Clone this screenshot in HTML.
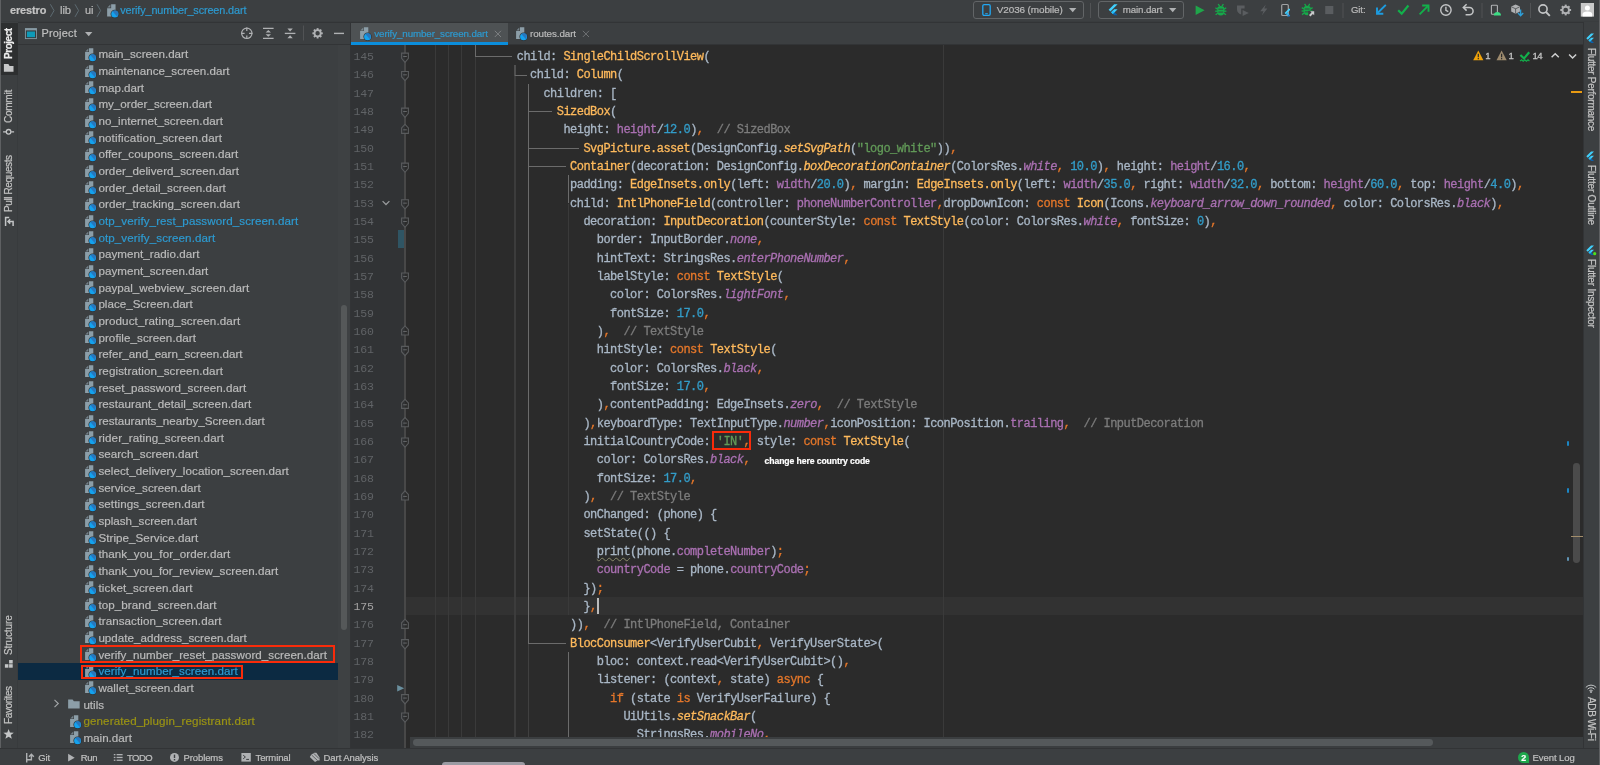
<!DOCTYPE html>
<html><head><meta charset="utf-8"><title>IDE</title>
<style>
html,body{margin:0;padding:0;background:#3c3f41;overflow:hidden;}
body{width:1600px;height:765px;position:relative;font-family:"Liberation Sans",sans-serif;}
#root{position:absolute;left:0;top:0;width:1600px;height:765px;will-change:transform;}
.t{position:absolute;white-space:pre;-webkit-text-stroke:0.2px;}
.c{position:absolute;white-space:pre;font-family:"Liberation Mono",monospace;font-size:12.0px;letter-spacing:-0.5345px;height:18px;line-height:18px;color:#a9b7c6;-webkit-text-stroke:0.3px;}
.c i{font-style:italic;}
.Y{color:#ffba5c;} .P{color:#aa70b2;} .K{color:#e5772a;} .N{color:#339dc9;} .S{color:#629a58;} .C{color:#7c7c7c;}
.ln{position:absolute;font-family:"Liberation Mono",monospace;font-size:11.5px;letter-spacing:-0.2344px;height:18px;line-height:18px;color:#606366;white-space:pre;}
svg{position:absolute;overflow:visible;}
.rv{position:absolute;white-space:pre;transform-origin:0 0;font-size:11px;color:#bbbbbb;height:14px;line-height:14px;-webkit-text-stroke:0.2px;}
</style></head><body><div id="root">
<div style="position:absolute;left:0px;top:21px;width:1600px;height:1px;background:#393c3e;"></div>
<div style="position:absolute;left:0px;top:22px;width:1600px;height:1px;background:#323436;"></div>
<div style="position:absolute;left:0px;top:22px;width:18px;height:726px;background:#3c3f41;"></div>
<div style="position:absolute;left:0px;top:0px;width:1px;height:765px;background:#5e6062;"></div>
<div style="position:absolute;left:17px;top:23px;width:1px;height:725px;background:#383b3d;"></div>
<div style="position:absolute;left:1px;top:23px;width:17px;height:52px;background:#2d2f30;"></div>
<div style="position:absolute;left:18px;top:44px;width:332px;height:1px;background:#323436;"></div>
<div style="position:absolute;left:350px;top:44px;width:1233px;height:1px;background:#323436;"></div>
<div style="position:absolute;left:350px;top:45px;width:56px;height:703px;background:#313335;"></div>
<div style="position:absolute;left:350px;top:22px;width:1px;height:726px;background:#323436;"></div>
<div style="position:absolute;left:406px;top:45px;width:1177px;height:703px;background:#2b2b2b;"></div>
<div style="position:absolute;left:404px;top:45px;width:2px;height:703px;background:#484848;"></div>
<div style="position:absolute;left:1583px;top:22px;width:17px;height:726px;background:#3c3f41;"></div>
<div style="position:absolute;left:1583px;top:22px;width:1px;height:726px;background:#323436;"></div>
<div style="position:absolute;left:0px;top:748px;width:1600px;height:17px;background:#3c3f41;"></div>
<div style="position:absolute;left:0px;top:748px;width:1600px;height:1px;background:#323436;"></div>
<div style="position:absolute;left:351px;top:23px;width:156.5px;height:22px;background:#4e5254;"></div>
<div style="position:absolute;left:351px;top:42px;width:156.5px;height:3px;background:#0b8edc;"></div>
<svg width="0" height="0" style="position:absolute"><defs>
<symbol id="df" viewBox="0 0 12 14">
  <path d="M4.0 0.2 H8.3 V12.1 H0.1 V4.1 H4.0 Z" fill="#8c9ea8"/>
  <path d="M3.3 0.5 L0.3 3.5 H3.3 Z" fill="#8c9ea8" fill-opacity=".7"/>
  <circle cx="7.6" cy="9.75" r="4.15" fill="#2e3133"/>
  <circle cx="7.6" cy="9.75" r="3.5" fill="#14a2ee"/>
  <path d="M5.3 7.1 A3.5 3.5 0 0 1 10.9 8.6 L10.0 12.3 Z" fill="#2a72b8" fill-opacity=".9"/>
</symbol>
<symbol id="fold" viewBox="0 0 16 16">
  <path d="M1 3 H6.4 L8 5.2 H15 V14 H1 Z" fill="#8c9ea8"/>
</symbol>
<symbol id="flutter" viewBox="0 0 16 16">
  <path d="M9.6 1 L2.2 8.4 L4.5 10.7 L14.2 1 Z" fill="#40d0fd"/>
  <path d="M9.6 7.6 L5.6 11.6 L7.9 13.9 L14.2 7.6 Z" fill="#40d0fd"/>
  <path d="M7.9 13.9 L9.6 15.6 H14.2 L10.2 11.6 Z" fill="#0c5fa8"/>
  <path d="M5.6 11.6 L7.9 9.3 L10.2 11.6 L7.9 13.9 Z" fill="#1fbcfd"/>
</symbol>
</defs></svg>
<div style="position:absolute;left:18px;top:663.19px;width:320.5px;height:16.4px;background:#0c2a42;"></div>
<svg style="left:84.90px;top:47.85px" width="12" height="14" ><use href="#df"/></svg>
<div class="t" style="left:98.40px;top:46.00px;height:16px;line-height:16px;font-size:11.6px;color:#bbbbbb;letter-spacing:0.014px;">main_screen.dart</div>
<svg style="left:84.90px;top:64.52px" width="12" height="14" ><use href="#df"/></svg>
<div class="t" style="left:98.40px;top:63.00px;height:16px;line-height:16px;font-size:11.6px;color:#bbbbbb;letter-spacing:0.012px;">maintenance_screen.dart</div>
<svg style="left:84.90px;top:81.19px" width="12" height="14" ><use href="#df"/></svg>
<div class="t" style="left:98.40px;top:80.00px;height:16px;line-height:16px;font-size:11.6px;color:#bbbbbb;letter-spacing:-0.019px;">map.dart</div>
<svg style="left:84.90px;top:97.86px" width="12" height="14" ><use href="#df"/></svg>
<div class="t" style="left:98.40px;top:96.00px;height:16px;line-height:16px;font-size:11.6px;color:#bbbbbb;letter-spacing:0.009px;">my_order_screen.dart</div>
<svg style="left:84.90px;top:114.53px" width="12" height="14" ><use href="#df"/></svg>
<div class="t" style="left:98.40px;top:113.00px;height:16px;line-height:16px;font-size:11.6px;color:#bbbbbb;letter-spacing:0.093px;">no_internet_screen.dart</div>
<svg style="left:84.90px;top:131.20px" width="12" height="14" ><use href="#df"/></svg>
<div class="t" style="left:98.40px;top:130.00px;height:16px;line-height:16px;font-size:11.6px;color:#bbbbbb;letter-spacing:0.164px;">notification_screen.dart</div>
<svg style="left:84.90px;top:147.87px" width="12" height="14" ><use href="#df"/></svg>
<div class="t" style="left:98.40px;top:146.00px;height:16px;line-height:16px;font-size:11.6px;color:#bbbbbb;letter-spacing:0.091px;">offer_coupons_screen.dart</div>
<svg style="left:84.90px;top:164.54px" width="12" height="14" ><use href="#df"/></svg>
<div class="t" style="left:98.40px;top:163.00px;height:16px;line-height:16px;font-size:11.6px;color:#bbbbbb;letter-spacing:0.079px;">order_deliverd_screen.dart</div>
<svg style="left:84.90px;top:181.21px" width="12" height="14" ><use href="#df"/></svg>
<div class="t" style="left:98.40px;top:180.00px;height:16px;line-height:16px;font-size:11.6px;color:#bbbbbb;letter-spacing:0.076px;">order_detail_screen.dart</div>
<svg style="left:84.90px;top:197.88px" width="12" height="14" ><use href="#df"/></svg>
<div class="t" style="left:98.40px;top:196.00px;height:16px;line-height:16px;font-size:11.6px;color:#bbbbbb;letter-spacing:0.117px;">order_tracking_screen.dart</div>
<svg style="left:84.90px;top:214.55px" width="12" height="14" ><use href="#df"/></svg>
<div class="t" style="left:98.40px;top:213.00px;height:16px;line-height:16px;font-size:11.6px;color:#2d9ad0;letter-spacing:0.093px;">otp_verify_rest_password_screen.dart</div>
<svg style="left:84.90px;top:231.22px" width="12" height="14" ><use href="#df"/></svg>
<div class="t" style="left:98.40px;top:230.00px;height:16px;line-height:16px;font-size:11.6px;color:#2d9ad0;letter-spacing:0.104px;">otp_verify_screen.dart</div>
<svg style="left:84.90px;top:247.89px" width="12" height="14" ><use href="#df"/></svg>
<div class="t" style="left:98.40px;top:246.00px;height:16px;line-height:16px;font-size:11.6px;color:#bbbbbb;letter-spacing:0.067px;">payment_radio.dart</div>
<svg style="left:84.90px;top:264.56px" width="12" height="14" ><use href="#df"/></svg>
<div class="t" style="left:98.40px;top:263.00px;height:16px;line-height:16px;font-size:11.6px;color:#bbbbbb;letter-spacing:0.057px;">payment_screen.dart</div>
<svg style="left:84.90px;top:281.23px" width="12" height="14" ><use href="#df"/></svg>
<div class="t" style="left:98.40px;top:280.00px;height:16px;line-height:16px;font-size:11.6px;color:#bbbbbb;letter-spacing:0.049px;">paypal_webview_screen.dart</div>
<svg style="left:84.90px;top:297.90px" width="12" height="14" ><use href="#df"/></svg>
<div class="t" style="left:98.40px;top:296.00px;height:16px;line-height:16px;font-size:11.6px;color:#bbbbbb;letter-spacing:0.012px;">place_Screen.dart</div>
<svg style="left:84.90px;top:314.57px" width="12" height="14" ><use href="#df"/></svg>
<div class="t" style="left:98.40px;top:313.00px;height:16px;line-height:16px;font-size:11.6px;color:#bbbbbb;letter-spacing:0.128px;">product_rating_screen.dart</div>
<svg style="left:84.90px;top:331.24px" width="12" height="14" ><use href="#df"/></svg>
<div class="t" style="left:98.40px;top:330.00px;height:16px;line-height:16px;font-size:11.6px;color:#bbbbbb;letter-spacing:0.083px;">profile_screen.dart</div>
<svg style="left:84.90px;top:347.91px" width="12" height="14" ><use href="#df"/></svg>
<div class="t" style="left:98.40px;top:346.00px;height:16px;line-height:16px;font-size:11.6px;color:#bbbbbb;letter-spacing:0.018px;">refer_and_earn_screen.dart</div>
<svg style="left:84.90px;top:364.58px" width="12" height="14" ><use href="#df"/></svg>
<div class="t" style="left:98.40px;top:363.00px;height:16px;line-height:16px;font-size:11.6px;color:#bbbbbb;letter-spacing:0.117px;">registration_screen.dart</div>
<svg style="left:84.90px;top:381.25px" width="12" height="14" ><use href="#df"/></svg>
<div class="t" style="left:98.40px;top:380.00px;height:16px;line-height:16px;font-size:11.6px;color:#bbbbbb;letter-spacing:0.062px;">reset_password_screen.dart</div>
<svg style="left:84.90px;top:397.92px" width="12" height="14" ><use href="#df"/></svg>
<div class="t" style="left:98.40px;top:396.00px;height:16px;line-height:16px;font-size:11.6px;color:#bbbbbb;letter-spacing:0.069px;">restaurant_detail_screen.dart</div>
<svg style="left:84.90px;top:414.59px" width="12" height="14" ><use href="#df"/></svg>
<div class="t" style="left:98.40px;top:413.00px;height:16px;line-height:16px;font-size:11.6px;color:#bbbbbb;">restaurants_nearby_Screen.dart</div>
<svg style="left:84.90px;top:431.26px" width="12" height="14" ><use href="#df"/></svg>
<div class="t" style="left:98.40px;top:430.00px;height:16px;line-height:16px;font-size:11.6px;color:#bbbbbb;letter-spacing:0.105px;">rider_rating_screen.dart</div>
<svg style="left:84.90px;top:447.93px" width="12" height="14" ><use href="#df"/></svg>
<div class="t" style="left:98.40px;top:446.00px;height:16px;line-height:16px;font-size:11.6px;color:#bbbbbb;letter-spacing:0.031px;">search_screen.dart</div>
<svg style="left:84.90px;top:464.60px" width="12" height="14" ><use href="#df"/></svg>
<div class="t" style="left:98.40px;top:463.00px;height:16px;line-height:16px;font-size:11.6px;color:#bbbbbb;letter-spacing:0.082px;">select_delivery_location_screen.dart</div>
<svg style="left:84.90px;top:481.27px" width="12" height="14" ><use href="#df"/></svg>
<div class="t" style="left:98.40px;top:480.00px;height:16px;line-height:16px;font-size:11.6px;color:#bbbbbb;letter-spacing:0.065px;">service_screen.dart</div>
<svg style="left:84.90px;top:497.94px" width="12" height="14" ><use href="#df"/></svg>
<div class="t" style="left:98.40px;top:496.00px;height:16px;line-height:16px;font-size:11.6px;color:#bbbbbb;letter-spacing:0.095px;">settings_screen.dart</div>
<svg style="left:84.90px;top:514.61px" width="12" height="14" ><use href="#df"/></svg>
<div class="t" style="left:98.40px;top:513.00px;height:16px;line-height:16px;font-size:11.6px;color:#bbbbbb;letter-spacing:0.030px;">splash_screen.dart</div>
<svg style="left:84.90px;top:531.28px" width="12" height="14" ><use href="#df"/></svg>
<div class="t" style="left:98.40px;top:530.00px;height:16px;line-height:16px;font-size:11.6px;color:#bbbbbb;letter-spacing:0.064px;">Stripe_Service.dart</div>
<svg style="left:84.90px;top:547.95px" width="12" height="14" ><use href="#df"/></svg>
<div class="t" style="left:98.40px;top:546.00px;height:16px;line-height:16px;font-size:11.6px;color:#bbbbbb;letter-spacing:0.098px;">thank_you_for_order.dart</div>
<svg style="left:84.90px;top:564.62px" width="12" height="14" ><use href="#df"/></svg>
<div class="t" style="left:98.40px;top:563.00px;height:16px;line-height:16px;font-size:11.6px;color:#bbbbbb;letter-spacing:0.060px;">thank_you_for_review_screen.dart</div>
<svg style="left:84.90px;top:581.29px" width="12" height="14" ><use href="#df"/></svg>
<div class="t" style="left:98.40px;top:580.00px;height:16px;line-height:16px;font-size:11.6px;color:#bbbbbb;letter-spacing:0.150px;">ticket_screen.dart</div>
<svg style="left:84.90px;top:597.96px" width="12" height="14" ><use href="#df"/></svg>
<div class="t" style="left:98.40px;top:597.00px;height:16px;line-height:16px;font-size:11.6px;color:#bbbbbb;letter-spacing:0.068px;">top_brand_screen.dart</div>
<svg style="left:84.90px;top:614.63px" width="12" height="14" ><use href="#df"/></svg>
<div class="t" style="left:98.40px;top:613.00px;height:16px;line-height:16px;font-size:11.6px;color:#bbbbbb;letter-spacing:0.084px;">transaction_screen.dart</div>
<svg style="left:84.90px;top:631.30px" width="12" height="14" ><use href="#df"/></svg>
<div class="t" style="left:98.40px;top:630.00px;height:16px;line-height:16px;font-size:11.6px;color:#bbbbbb;letter-spacing:0.029px;">update_address_screen.dart</div>
<svg style="left:84.90px;top:647.97px" width="12" height="14" ><use href="#df"/></svg>
<div class="t" style="left:98.40px;top:647.00px;height:16px;line-height:16px;font-size:11.6px;color:#bbbbbb;letter-spacing:0.060px;">verify_number_reset_password_screen.dart</div>
<svg style="left:84.90px;top:664.64px" width="12" height="14" ><use href="#df"/></svg>
<div class="t" style="left:98.40px;top:663.00px;height:16px;line-height:16px;font-size:11.6px;color:#2d9ad0;letter-spacing:0.058px;">verify_number_screen.dart</div>
<svg style="left:84.90px;top:681.31px" width="12" height="14" ><use href="#df"/></svg>
<div class="t" style="left:98.40px;top:680.00px;height:16px;line-height:16px;font-size:11.6px;color:#bbbbbb;letter-spacing:0.070px;">wallet_screen.dart</div>
<svg style="left:53.4px;top:699.43px" width="7" height="9" viewBox="0 0 7 9"><path d="M1.5 0.8 L5.3 4.5 L1.5 8.2" fill="none" stroke="#a4a7a9" stroke-width="1.1"/></svg>
<svg style="left:67.10px;top:696.83px" width="13.8" height="13.2" ><use href="#fold"/></svg>
<div class="t" style="left:83.40px;top:697.00px;height:16px;line-height:16px;font-size:11.6px;color:#bbbbbb;letter-spacing:0.027px;">utils</div>
<svg style="left:69.90px;top:714.65px" width="12" height="14" ><use href="#df"/></svg>
<div class="t" style="left:83.40px;top:713.00px;height:16px;line-height:16px;font-size:11.6px;color:#9a9314;letter-spacing:0.122px;">generated_plugin_registrant.dart</div>
<svg style="left:69.90px;top:731.32px" width="12" height="14" ><use href="#df"/></svg>
<div class="t" style="left:83.40px;top:730.00px;height:16px;line-height:16px;font-size:11.6px;color:#bbbbbb;letter-spacing:0.019px;">main.dart</div>
<div style="position:absolute;left:338px;top:45px;width:12px;height:703px;background:#3e4143;"></div>
<div style="position:absolute;left:340.9px;top:305px;width:6.4px;height:325.1px;background:#555859;border-radius:3.2px;"></div>
<div style="position:absolute;left:80.4px;top:645.0px;width:250.4px;height:13.6px;border:2.5px solid #f92b0a;"></div>
<div style="position:absolute;left:81.2px;top:665.2px;width:158px;height:10px;border:2.5px solid #f92b0a;"></div>
<div style="position:absolute;left:406px;top:596.7px;width:1177px;height:18.3px;background:#323232;"></div>
<div style="position:absolute;left:943px;top:45px;width:1px;height:692px;background:#3a3a3a;"></div>
<div style="position:absolute;left:435px;top:45px;width:1px;height:692px;background:#3a3a3a;"></div>
<div style="position:absolute;left:448px;top:45px;width:1px;height:692px;background:#3a3a3a;"></div>
<div style="position:absolute;left:461px;top:45px;width:1px;height:692px;background:#3a3a3a;"></div>
<div style="position:absolute;left:475px;top:45px;width:1px;height:692px;background:#3a3a3a;"></div>
<div style="position:absolute;left:514px;top:65px;width:2px;height:672px;background:#3c3c3c;"></div>
<div style="position:absolute;left:568px;top:204px;width:1px;height:411px;background:#3a3a3a;"></div>
<div style="position:absolute;left:528px;top:643px;width:1px;height:94px;background:#404040;"></div>
<div style="position:absolute;left:475px;top:45px;width:1px;height:11.700000000000003px;background:#6b6b6b;"></div>
<div style="position:absolute;left:475px;top:56px;width:37.39999999999998px;height:1px;background:#6b6b6b;"></div>
<div style="position:absolute;left:514px;top:65px;width:2px;height:11px;background:#505050;"></div>
<div style="position:absolute;left:515px;top:75px;width:11.799999999999955px;height:1px;background:#6b6b6b;"></div>
<div style="position:absolute;left:528px;top:83.5px;width:1px;height:559.76px;background:#6b6b6b;"></div>
<div style="position:absolute;left:528px;top:111px;width:24.299999999999955px;height:1px;background:#6b6b6b;"></div>
<div style="position:absolute;left:528px;top:148px;width:51.0px;height:1px;background:#6b6b6b;"></div>
<div style="position:absolute;left:528px;top:166px;width:37.799999999999955px;height:1px;background:#6b6b6b;"></div>
<div style="position:absolute;left:528px;top:643px;width:37.799999999999955px;height:1px;background:#6b6b6b;"></div>
<div style="position:absolute;left:568px;top:175.41px;width:1px;height:27.92999999999998px;background:#6b6b6b;"></div>
<div style="position:absolute;left:568px;top:651.99px;width:1px;height:85.00999999999999px;background:#6b6b6b;"></div>
<div class="c" style="left:516.77px;top:48px">child: <span class="Y">SingleChildScrollView</span>(</div>
<div class="ln" style="left:353.6px;top:48px;color:#606366">145</div>
<div class="c" style="left:530.10px;top:66px">child: <span class="Y">Column</span>(</div>
<div class="ln" style="left:353.6px;top:66px;color:#606366">146</div>
<div class="c" style="left:543.43px;top:85px">children: [</div>
<div class="ln" style="left:353.6px;top:85px;color:#606366">147</div>
<div class="c" style="left:556.77px;top:103px"><span class="Y">SizedBox</span>(</div>
<div class="ln" style="left:353.6px;top:103px;color:#606366">148</div>
<div class="c" style="left:563.43px;top:121px">height: <span class="P">height</span>/<span class="N">12.0</span>)<span class="K">,</span><span class="C">  // SizedBox</span></div>
<div class="ln" style="left:353.6px;top:121px;color:#606366">149</div>
<div class="c" style="left:583.43px;top:140px"><span class="Y">SvgPicture.asset</span>(DesignConfig.<i class="Y">setSvgPath</i>(<span class="S">"logo_white"</span>))<span class="K">,</span></div>
<div class="ln" style="left:353.6px;top:140px;color:#606366">150</div>
<div class="c" style="left:570.10px;top:158px"><span class="Y">Container</span>(decoration: DesignConfig.<i class="Y">boxDecorationContainer</i>(ColorsRes.<i class="P">white</i><span class="K">,</span> <span class="N">10.0</span>)<span class="K">,</span> height: <span class="P">height</span>/<span class="N">16.0</span><span class="K">,</span></div>
<div class="ln" style="left:353.6px;top:158px;color:#606366">151</div>
<div class="c" style="left:570.10px;top:176px">padding: <span class="Y">EdgeInsets.only</span>(left: <span class="P">width</span>/<span class="N">20.0</span>)<span class="K">,</span> margin: <span class="Y">EdgeInsets.only</span>(left: <span class="P">width</span>/<span class="N">35.0</span><span class="K">,</span> right: <span class="P">width</span>/<span class="N">32.0</span><span class="K">,</span> bottom: <span class="P">height</span>/<span class="N">60.0</span><span class="K">,</span> top: <span class="P">height</span>/<span class="N">4.0</span>)<span class="K">,</span></div>
<div class="ln" style="left:353.6px;top:176px;color:#606366">152</div>
<div class="c" style="left:570.10px;top:195px">child: <span class="Y">IntlPhoneField</span>(controller: <span class="P">phoneNumberController</span><span class="K">,</span>dropDownIcon: <span class="K">const</span> <span class="Y">Icon</span>(Icons.<i class="P">keyboard_arrow_down_rounded</i><span class="K">,</span> color: ColorsRes.<i class="P">black</i>)<span class="K">,</span></div>
<div class="ln" style="left:353.6px;top:195px;color:#606366">153</div>
<div class="c" style="left:583.43px;top:213px">decoration: <span class="Y">InputDecoration</span>(counterStyle: <span class="K">const</span> <span class="Y">TextStyle</span>(color: ColorsRes.<i class="P">white</i><span class="K">,</span> fontSize: <span class="N">0</span>)<span class="K">,</span></div>
<div class="ln" style="left:353.6px;top:213px;color:#606366">154</div>
<div class="c" style="left:596.77px;top:231px">border: InputBorder.<i class="P">none</i><span class="K">,</span></div>
<div class="ln" style="left:353.6px;top:231px;color:#606366">155</div>
<div class="c" style="left:596.77px;top:250px">hintText: StringsRes.<i class="P">enterPhoneNumber</i><span class="K">,</span></div>
<div class="ln" style="left:353.6px;top:250px;color:#606366">156</div>
<div class="c" style="left:596.77px;top:268px">labelStyle: <span class="K">const</span> <span class="Y">TextStyle</span>(</div>
<div class="ln" style="left:353.6px;top:268px;color:#606366">157</div>
<div class="c" style="left:610.10px;top:286px">color: ColorsRes.<i class="P">lightFont</i><span class="K">,</span></div>
<div class="ln" style="left:353.6px;top:286px;color:#606366">158</div>
<div class="c" style="left:610.10px;top:305px">fontSize: <span class="N">17.0</span><span class="K">,</span></div>
<div class="ln" style="left:353.6px;top:305px;color:#606366">159</div>
<div class="c" style="left:596.77px;top:323px">)<span class="K">,</span><span class="C">  // TextStyle</span></div>
<div class="ln" style="left:353.6px;top:323px;color:#606366">160</div>
<div class="c" style="left:596.77px;top:341px">hintStyle: <span class="K">const</span> <span class="Y">TextStyle</span>(</div>
<div class="ln" style="left:353.6px;top:341px;color:#606366">161</div>
<div class="c" style="left:610.10px;top:360px">color: ColorsRes.<i class="P">black</i><span class="K">,</span></div>
<div class="ln" style="left:353.6px;top:360px;color:#606366">162</div>
<div class="c" style="left:610.10px;top:378px">fontSize: <span class="N">17.0</span><span class="K">,</span></div>
<div class="ln" style="left:353.6px;top:378px;color:#606366">163</div>
<div class="c" style="left:596.77px;top:396px">)<span class="K">,</span>contentPadding: EdgeInsets.<i class="P">zero</i><span class="K">,</span><span class="C">  // TextStyle</span></div>
<div class="ln" style="left:353.6px;top:396px;color:#606366">164</div>
<div class="c" style="left:583.43px;top:415px">)<span class="K">,</span>keyboardType: TextInputType.<i class="P">number</i><span class="K">,</span>iconPosition: IconPosition.<span class="P">trailing</span><span class="K">,</span><span class="C">  // InputDecoration</span></div>
<div class="ln" style="left:353.6px;top:415px;color:#606366">165</div>
<div class="c" style="left:583.43px;top:433px">initialCountryCode: <span class="S">'IN'</span><span class="K">,</span> style: <span class="K">const</span> <span class="Y">TextStyle</span>(</div>
<div class="ln" style="left:353.6px;top:433px;color:#606366">166</div>
<div class="c" style="left:596.77px;top:451px">color: ColorsRes.<i class="P">black</i><span class="K">,</span></div>
<div class="ln" style="left:353.6px;top:451px;color:#606366">167</div>
<div class="c" style="left:596.77px;top:470px">fontSize: <span class="N">17.0</span><span class="K">,</span></div>
<div class="ln" style="left:353.6px;top:470px;color:#606366">168</div>
<div class="c" style="left:583.43px;top:488px">)<span class="K">,</span><span class="C">  // TextStyle</span></div>
<div class="ln" style="left:353.6px;top:488px;color:#606366">169</div>
<div class="c" style="left:583.43px;top:506px">onChanged: (phone) {</div>
<div class="ln" style="left:353.6px;top:506px;color:#606366">170</div>
<div class="c" style="left:583.43px;top:525px">setState(() {</div>
<div class="ln" style="left:353.6px;top:525px;color:#606366">171</div>
<div class="c" style="left:596.77px;top:543px"><span style="text-decoration:underline wavy #8a8a6a 0.6px;text-underline-offset:1.5px">print</span>(phone.<span class="P">completeNumber</span>)<span class="K">;</span></div>
<div class="ln" style="left:353.6px;top:543px;color:#606366">172</div>
<div class="c" style="left:596.77px;top:561px"><span class="P">countryCode</span> = phone.<span class="P">countryCode</span><span class="K">;</span></div>
<div class="ln" style="left:353.6px;top:561px;color:#606366">173</div>
<div class="c" style="left:583.43px;top:580px">})<span class="K">;</span></div>
<div class="ln" style="left:353.6px;top:580px;color:#606366">174</div>
<div class="c" style="left:583.43px;top:598px">}<span class="K">,</span></div>
<div class="ln" style="left:353.6px;top:598px;color:#a4a3a3">175</div>
<div class="c" style="left:570.10px;top:616px">))<span class="K">,</span><span class="C">  // IntlPhoneField, Container</span></div>
<div class="ln" style="left:353.6px;top:616px;color:#606366">176</div>
<div class="c" style="left:570.10px;top:635px"><span class="Y">BlocConsumer</span>&lt;VerifyUserCubit<span class="K">,</span> VerifyUserState&gt;(</div>
<div class="ln" style="left:353.6px;top:635px;color:#606366">177</div>
<div class="c" style="left:596.77px;top:653px">bloc: context.read&lt;VerifyUserCubit&gt;()<span class="K">,</span></div>
<div class="ln" style="left:353.6px;top:653px;color:#606366">178</div>
<div class="c" style="left:596.77px;top:671px">listener: (context<span class="K">,</span> state) <span class="K">async</span> {</div>
<div class="ln" style="left:353.6px;top:671px;color:#606366">179</div>
<div class="c" style="left:610.10px;top:690px"><span class="K">if</span> (state <span class="K">is</span> VerifyUserFailure) {</div>
<div class="ln" style="left:353.6px;top:690px;color:#606366">180</div>
<div class="c" style="left:623.43px;top:708px">UiUtils.<i class="Y">setSnackBar</i>(</div>
<div class="ln" style="left:353.6px;top:708px;color:#606366">181</div>
<div class="c" style="left:636.77px;top:726px">StringsRes.<i class="P">mobileNo</i><span class="K">,</span></div>
<div class="ln" style="left:353.6px;top:726px;color:#606366">182</div>
<div style="position:absolute;left:597.3676px;top:598.0px;width:1.2px;height:16px;background:#bbbbbb;"></div>
<svg style="left:0;top:0" width="1600" height="765" viewBox="0 0 1600 765"><defs><linearGradient id="fg" x1="0" x2="1" y1="0" y2="0"><stop offset="0.46" stop-color="#313335"/><stop offset="0.54" stop-color="#2b2b2b"/></linearGradient></defs><path d="M401.6 53.10 H408.4 V58.40 L405 62.30 L401.6 58.40 Z" fill="url(#fg)" stroke="#595b5d" stroke-width="1.1"/><path d="M403.2 56.50 H406.8" stroke="#66686a" stroke-width="1"/><path d="M401.6 71.43 H408.4 V76.73 L405 80.63 L401.6 76.73 Z" fill="url(#fg)" stroke="#595b5d" stroke-width="1.1"/><path d="M403.2 74.83 H406.8" stroke="#66686a" stroke-width="1"/><path d="M401.6 108.09 H408.4 V113.39 L405 117.29 L401.6 113.39 Z" fill="url(#fg)" stroke="#595b5d" stroke-width="1.1"/><path d="M403.2 111.49 H406.8" stroke="#66686a" stroke-width="1"/><path d="M401.6 163.08 H408.4 V168.38 L405 172.28 L401.6 168.38 Z" fill="url(#fg)" stroke="#595b5d" stroke-width="1.1"/><path d="M403.2 166.48 H406.8" stroke="#66686a" stroke-width="1"/><path d="M401.6 199.74 H408.4 V205.04 L405 208.94 L401.6 205.04 Z" fill="url(#fg)" stroke="#595b5d" stroke-width="1.1"/><path d="M403.2 203.14 H406.8" stroke="#66686a" stroke-width="1"/><path d="M401.6 218.07 H408.4 V223.37 L405 227.27 L401.6 223.37 Z" fill="url(#fg)" stroke="#595b5d" stroke-width="1.1"/><path d="M403.2 221.47 H406.8" stroke="#66686a" stroke-width="1"/><path d="M401.6 273.06 H408.4 V278.36 L405 282.26 L401.6 278.36 Z" fill="url(#fg)" stroke="#595b5d" stroke-width="1.1"/><path d="M403.2 276.46 H406.8" stroke="#66686a" stroke-width="1"/><path d="M401.6 346.38 H408.4 V351.68 L405 355.58 L401.6 351.68 Z" fill="url(#fg)" stroke="#595b5d" stroke-width="1.1"/><path d="M403.2 349.78 H406.8" stroke="#66686a" stroke-width="1"/><path d="M401.6 438.03 H408.4 V443.33 L405 447.23 L401.6 443.33 Z" fill="url(#fg)" stroke="#595b5d" stroke-width="1.1"/><path d="M403.2 441.43 H406.8" stroke="#66686a" stroke-width="1"/><path d="M401.6 639.66 H408.4 V644.96 L405 648.86 L401.6 644.96 Z" fill="url(#fg)" stroke="#595b5d" stroke-width="1.1"/><path d="M403.2 643.06 H406.8" stroke="#66686a" stroke-width="1"/><path d="M401.6 694.65 H408.4 V699.95 L405 703.85 L401.6 699.95 Z" fill="url(#fg)" stroke="#595b5d" stroke-width="1.1"/><path d="M403.2 698.05 H406.8" stroke="#66686a" stroke-width="1"/><path d="M401.6 712.98 H408.4 V718.28 L405 722.18 L401.6 718.28 Z" fill="url(#fg)" stroke="#595b5d" stroke-width="1.1"/><path d="M403.2 716.38 H406.8" stroke="#66686a" stroke-width="1"/><path d="M401.6 133.42 H408.4 V127.92 L405 124.32 L401.6 127.92 Z" fill="url(#fg)" stroke="#595b5d" stroke-width="1.1"/><path d="M403.2 129.82 H406.8" stroke="#66686a" stroke-width="1"/><path d="M401.6 335.05 H408.4 V329.55 L405 325.95 L401.6 329.55 Z" fill="url(#fg)" stroke="#595b5d" stroke-width="1.1"/><path d="M403.2 331.45 H406.8" stroke="#66686a" stroke-width="1"/><path d="M401.6 408.37 H408.4 V402.87 L405 399.27 L401.6 402.87 Z" fill="url(#fg)" stroke="#595b5d" stroke-width="1.1"/><path d="M403.2 404.77 H406.8" stroke="#66686a" stroke-width="1"/><path d="M401.6 426.70 H408.4 V421.20 L405 417.60 L401.6 421.20 Z" fill="url(#fg)" stroke="#595b5d" stroke-width="1.1"/><path d="M403.2 423.10 H406.8" stroke="#66686a" stroke-width="1"/><path d="M401.6 500.02 H408.4 V494.52 L405 490.92 L401.6 494.52 Z" fill="url(#fg)" stroke="#595b5d" stroke-width="1.1"/><path d="M403.2 496.42 H406.8" stroke="#66686a" stroke-width="1"/><path d="M401.6 628.33 H408.4 V622.83 L405 619.23 L401.6 622.83 Z" fill="url(#fg)" stroke="#595b5d" stroke-width="1.1"/><path d="M403.2 624.73 H406.8" stroke="#66686a" stroke-width="1"/><path d="M382.6 201.14 L386 204.54 L389.4 201.14" fill="none" stroke="#9a9c9e" stroke-width="1.2"/><path d="M397.2 685.0 L404.2 688.3 L397.2 691.6 Z" fill="#6a8f9e"/></svg>
<div style="position:absolute;left:397.6px;top:230.2px;width:6.6px;height:18.3px;background:#2f5564;"></div>
<div class="t" style="left:10.00px;top:2.00px;height:16px;line-height:16px;font-size:10.94px;color:#c4c4c4;font-weight:bold;letter-spacing:-0.126px;">erestro</div>
<div class="t" style="left:60.00px;top:2.00px;height:16px;line-height:16px;font-size:11.27px;color:#bbbbbb;letter-spacing:-0.090px;">lib</div>
<div class="t" style="left:85.10px;top:2.00px;height:16px;line-height:16px;font-size:10.93px;color:#bbbbbb;letter-spacing:-0.100px;">ui</div>
<svg style="left:0;top:0" width="130" height="22" viewBox="0 0 130 22"><path d="M50.4 4.3 L54.0 10.6 L50.4 16.9" fill="none" stroke="#5d6b72" stroke-width="1"/><path d="M75.0 4.3 L78.6 10.6 L75.0 16.9" fill="none" stroke="#5d6b72" stroke-width="1"/><path d="M97.0 4.3 L100.6 10.6 L97.0 16.9" fill="none" stroke="#5d6b72" stroke-width="1"/></svg>
<svg style="left:106.50px;top:3.60px" width="12.4" height="14.4" ><use href="#df"/></svg>
<div class="t" style="left:120.30px;top:2.00px;height:16px;line-height:16px;font-size:10.86px;color:#2d9ad0;letter-spacing:-0.127px;">verify_number_screen.dart</div>
<div style="position:absolute;left:972.6px;top:1.2px;width:111.4px;height:17.6px;border:1px solid #626567;border-radius:3px;box-sizing:border-box;"></div>
<svg style="left:982px;top:4.3px" width="9" height="12" viewBox="0 0 9 12"><rect x="0.8" y="0.6" width="7.4" height="10.8" rx="1.3" fill="none" stroke="#22a7f2" stroke-width="1.3"/><rect x="3.2" y="9.2" width="2.6" height="1" fill="#22a7f2"/></svg>
<div class="t" style="left:996.80px;top:2.00px;height:16px;line-height:16px;font-size:9.95px;color:#bbbbbb;letter-spacing:-0.113px;">V2036 (mobile)</div>
<svg style="left:1069px;top:8.2px" width="8" height="5" viewBox="0 0 8 5"><path d="M0 0 H7.4 L3.7 4.2 Z" fill="#afb1b3"/></svg>
<div style="position:absolute;left:1090px;top:3px;width:1px;height:15px;background:#515355;"></div>
<div style="position:absolute;left:1098.1px;top:1.2px;width:86.2px;height:17.6px;border:1px solid #626567;border-radius:3px;box-sizing:border-box;"></div>
<svg style="left:1106.60px;top:3.20px" width="12" height="13" ><use href="#flutter"/></svg>
<div class="t" style="left:1122.80px;top:2.00px;height:16px;line-height:16px;font-size:9.71px;color:#bbbbbb;letter-spacing:-0.105px;">main.dart</div>
<svg style="left:1169px;top:8.2px" width="8" height="5" viewBox="0 0 8 5"><path d="M0 0 H7.4 L3.7 4.2 Z" fill="#afb1b3"/></svg>
<svg style="left:0;top:0" width="1600" height="22" viewBox="0 0 1600 22"><path d="M1195.6 5.4 L1204.6 10.2 L1195.6 15 Z" fill="#1fa54a"/><g fill="#16a94a"><path d="M1217.2 8.799999999999999 Q1217.2 5.999999999999999 1220.8 5.999999999999999 Q1224.3999999999999 5.999999999999999 1224.3999999999999 8.799999999999999 V11.799999999999999 Q1224.3999999999999 15.399999999999999 1220.8 15.399999999999999 Q1217.2 15.399999999999999 1217.2 11.799999999999999 Z"/></g><g stroke="#16a94a" stroke-width="1.3" fill="none"><path d="M1218.2 3.999999999999999 L1219.6 6.199999999999999"/><path d="M1223.3999999999999 3.999999999999999 L1222.0 6.199999999999999"/><path d="M1215.3999999999999 7.799999999999999 L1217.6 9.2"/><path d="M1226.2 7.799999999999999 L1224.0 9.2"/><path d="M1215.2 11.2 H1217.6"/><path d="M1226.3999999999999 11.2 H1224.0"/><path d="M1215.6 14.799999999999999 L1217.8 13.2"/><path d="M1226.0 14.799999999999999 L1223.8 13.2"/></g><g stroke="#3c3f41" stroke-width="0.9"><path d="M1218.3999999999999 9.2 H1223.2"/><path d="M1218.3999999999999 12.1 H1223.2"/></g><path d="M1237 5.4 H1244.6 V8.4 H1241.2 V14.6 C1238.6 13.6 1237 11.8 1237 9.4 Z" fill="#5a5d60"/><path d="M1242.6 10 L1248.8 13 L1242.6 16 Z" fill="#5a5d60"/><path d="M1265.8 4.4 L1260.2 11.2 H1263.5 L1261.8 15.6 L1267.4 8.6 H1264.3 Z" fill="#5a5d60"/><rect x="1281.7" y="4.5" width="6.6" height="11" rx="1" fill="none" stroke="#a0a2a4" stroke-width="1.2"/><path d="M1288.8 8.7 L1284.6 12.9 L1285.9 14.2 L1290 10.1 V8.7 Z" fill="#45d1fd"/><path d="M1287.6 13 L1289 14.4 L1286.8 16.5 H1289.4 L1290.2 15.6 L1287.6 13 Z" fill="#1b86d8"/><path d="M1285.9 14.2 L1287.6 12.6 L1289 14 L1287.6 15.6 Z" fill="#2cb7f6"/><g fill="#16a94a"><path d="M1303.6000000000001 8.6 Q1303.6000000000001 5.8 1307.2 5.8 Q1310.8 5.8 1310.8 8.6 V11.6 Q1310.8 15.2 1307.2 15.2 Q1303.6000000000001 15.2 1303.6000000000001 11.6 Z"/></g><g stroke="#16a94a" stroke-width="1.3" fill="none"><path d="M1304.6000000000001 3.8 L1306.0 6.0"/><path d="M1309.8 3.8 L1308.4 6.0"/><path d="M1301.8 7.6 L1304.0 9.0"/><path d="M1312.6000000000001 7.6 L1310.4 9.0"/><path d="M1301.6000000000001 11.0 H1304.0"/><path d="M1312.8 11.0 H1310.4"/><path d="M1302.0 14.6 L1304.2 13.0"/><path d="M1312.4 14.6 L1310.2 13.0"/></g><g stroke="#3c3f41" stroke-width="0.9"><path d="M1304.8 9.0 H1309.6000000000001"/><path d="M1304.8 11.9 H1309.6000000000001"/></g><path d="M1308.2 10.8 H1315 V17 H1308.2 Z" fill="#3c3f41"/><path d="M1310.2 11.2 H1314.2 V15.2 L1312.9 13.9 L1310.4 16.4 L1309 15 L1311.5 12.5 Z" fill="#c8cacb"/><rect x="1325.2" y="6" width="8.1" height="8.1" fill="#5a5d60"/><rect x="1342.5" y="3" width="1" height="15" fill="#515355"/><g stroke="#1d9ce0" stroke-width="1.9" fill="none"><path d="M1385.8 4.8 L1377.6 13"/><path d="M1377 7.4 V13.7 H1383.3"/></g><path d="M1398.2 10.2 L1401.7 13.7 L1408.4 5.5" stroke="#12b14b" stroke-width="2.2" fill="none"/><g stroke="#12b14b" stroke-width="1.9" fill="none"><path d="M1419.6 14.4 L1427.8 6.2"/><path d="M1422.2 5.5 H1428.5 V11.8"/></g><circle cx="1445.9" cy="10" r="5.2" fill="none" stroke="#c3c5c6" stroke-width="1.4"/><path d="M1445.9 6.8 V10.3 L1448.3 11.7" stroke="#c3c5c6" stroke-width="1.4" fill="none"/><path d="M1464 7.4 H1469.4 A3.7 3.7 0 0 1 1469.4 14.8 H1465.6" stroke="#c3c5c6" stroke-width="1.5" fill="none"/><path d="M1466.6 4.2 L1463.3 7.4 L1466.6 10.6" stroke="#c3c5c6" stroke-width="1.5" fill="none"/><rect x="1481.5" y="3" width="1" height="15" fill="#515355"/><rect x="1491.4" y="5.2" width="6" height="9" rx="0.8" fill="none" stroke="#afb1b3" stroke-width="1.1"/><path d="M1493.8 15.6 A3.6 3.6 0 0 1 1501 15.6 Z" fill="#3ddc84"/><path d="M1515.6 4.6 L1520 6.6 V11.6 L1515.6 13.8 L1511.2 11.6 V6.6 Z" fill="#afb1b3"/><path d="M1515.6 8.6 V13.6 M1511.4 6.8 L1515.6 8.8 L1519.8 6.8" stroke="#3c3f41" stroke-width="0.7" fill="none"/><path d="M1520.6 9.6 V15.4 M1518 13 L1520.6 15.8 L1523.2 13" stroke="#2e9fd9" stroke-width="1.4" fill="none"/><rect x="1530" y="3" width="1" height="15" fill="#515355"/><circle cx="1543" cy="9" r="4.1" fill="none" stroke="#c3c5c6" stroke-width="1.6"/><path d="M1546 12 L1549.8 15.8" stroke="#c3c5c6" stroke-width="1.9"/><g transform="translate(1565.7 10)"><circle r="3.3" fill="none" stroke="#afb1b3" stroke-width="1.9"/><rect x="-1" y="-5.4" width="2" height="2.4" fill="#afb1b3" transform="rotate(0)"/><rect x="-1" y="-5.4" width="2" height="2.4" fill="#afb1b3" transform="rotate(45)"/><rect x="-1" y="-5.4" width="2" height="2.4" fill="#afb1b3" transform="rotate(90)"/><rect x="-1" y="-5.4" width="2" height="2.4" fill="#afb1b3" transform="rotate(135)"/><rect x="-1" y="-5.4" width="2" height="2.4" fill="#afb1b3" transform="rotate(180)"/><rect x="-1" y="-5.4" width="2" height="2.4" fill="#afb1b3" transform="rotate(225)"/><rect x="-1" y="-5.4" width="2" height="2.4" fill="#afb1b3" transform="rotate(270)"/><rect x="-1" y="-5.4" width="2" height="2.4" fill="#afb1b3" transform="rotate(315)"/></g><rect x="1580.8" y="3" width="13.2" height="13.6" fill="#c9c9c9"/><circle cx="1587.4" cy="8" r="2.5" fill="#ffffff"/><path d="M1582.6 16.6 V14.2 Q1582.6 11.6 1587.4 11.6 Q1592.2 11.6 1592.2 14.2 V16.6 Z" fill="#ffffff"/></svg>
<div class="t" style="left:1351.00px;top:2.00px;height:16px;line-height:16px;font-size:9.55px;color:#bbbbbb;letter-spacing:-0.088px;">Git:</div>
<svg style="left:24px;top:27px" width="14" height="13" viewBox="24 27 14 13"><rect x="25.4" y="28.7" width="11" height="9.9" fill="#34383a" stroke="#879aa4" stroke-width="0.9"/><rect x="25" y="28.3" width="11.8" height="2.1" fill="#879aa4"/><rect x="26.9" y="31.5" width="8.1" height="5.7" fill="#0e9ab8"/></svg>
<div class="t" style="left:41.40px;top:25.00px;height:16px;line-height:16px;font-size:10.9px;color:#c0c0c0;letter-spacing:0.244px;">Project</div>
<svg style="left:84.6px;top:32px" width="8" height="5" viewBox="0 0 8 5"><path d="M0 0 H7.4 L3.7 4.2 Z" fill="#afb1b3"/></svg>
<svg style="left:0;top:22px" width="350" height="22" viewBox="0 22 350 22"><circle cx="246.8" cy="33.3" r="5.2" fill="none" stroke="#afb1b3" stroke-width="1.2"/><path d="M246.8 27.6 V31 M246.8 35.6 V39 M241.2 33.3 H244.6 M249 33.3 H252.4" stroke="#afb1b3" stroke-width="1.2"/><path d="M263 28.4 H273.6 M263 38.4 H273.6" stroke="#afb1b3" stroke-width="1.3"/><path d="M268.3 30 L271 32.6 H265.6 Z M268.3 36.8 L271 34.2 H265.6 Z" fill="#afb1b3"/><path d="M284.8 33.4 H295.4" stroke="#afb1b3" stroke-width="1.3"/><path d="M290.1 31.6 L292.8 28.6 H287.4 Z M290.1 35.2 L292.8 38.2 H287.4 Z" fill="#afb1b3"/><rect x="303" y="25.5" width="1" height="15" fill="#515355"/><g transform="translate(317.6 33.3)"><circle r="3.1" fill="none" stroke="#afb1b3" stroke-width="1.8"/><rect x="-0.95" y="-5.2" width="1.9" height="2.3" fill="#afb1b3" transform="rotate(0)"/><rect x="-0.95" y="-5.2" width="1.9" height="2.3" fill="#afb1b3" transform="rotate(45)"/><rect x="-0.95" y="-5.2" width="1.9" height="2.3" fill="#afb1b3" transform="rotate(90)"/><rect x="-0.95" y="-5.2" width="1.9" height="2.3" fill="#afb1b3" transform="rotate(135)"/><rect x="-0.95" y="-5.2" width="1.9" height="2.3" fill="#afb1b3" transform="rotate(180)"/><rect x="-0.95" y="-5.2" width="1.9" height="2.3" fill="#afb1b3" transform="rotate(225)"/><rect x="-0.95" y="-5.2" width="1.9" height="2.3" fill="#afb1b3" transform="rotate(270)"/><rect x="-0.95" y="-5.2" width="1.9" height="2.3" fill="#afb1b3" transform="rotate(315)"/></g><path d="M334 33.4 H344" stroke="#afb1b3" stroke-width="1.4"/></svg>
<svg style="left:360.00px;top:26.60px" width="12" height="14" ><use href="#df"/></svg>
<div class="t" style="left:374.30px;top:26.00px;height:16px;line-height:16px;font-size:9.78px;color:#2d9ad0;letter-spacing:-0.106px;">verify_number_screen.dart</div>
<svg style="left:494px;top:29.6px" width="8" height="8" viewBox="0 0 8 8"><path d="M0.8 0.8 L7 7 M7 0.8 L0.8 7" stroke="#7d8082" stroke-width="1"/></svg>
<svg style="left:516.00px;top:26.60px" width="12" height="14" ><use href="#df"/></svg>
<div class="t" style="left:530.00px;top:26.00px;height:16px;line-height:16px;font-size:9.86px;color:#bbbbbb;letter-spacing:-0.096px;">routes.dart</div>
<svg style="left:582.4px;top:29.6px" width="8" height="8" viewBox="0 0 8 8"><path d="M0.8 0.8 L7 7 M7 0.8 L0.8 7" stroke="#6e7173" stroke-width="1"/></svg>
<div class="rv" style="font-size:10.0px;color:#ececec;font-weight:bold;letter-spacing:-0.457px;left:2.20px;top:59.30px;transform:rotate(-90deg);">Project</div>
<div class="rv" style="font-size:10.0px;color:#c4c4c4;letter-spacing:-0.257px;left:2.20px;top:123.10px;transform:rotate(-90deg);">Commit</div>
<div class="rv" style="font-size:10.0px;color:#c4c4c4;letter-spacing:-0.385px;left:2.20px;top:212.00px;transform:rotate(-90deg);">Pull Requests</div>
<div class="rv" style="font-size:10.0px;color:#c4c4c4;letter-spacing:-0.097px;left:2.20px;top:654.90px;transform:rotate(-90deg);">Structure</div>
<div class="rv" style="font-size:10.0px;color:#c4c4c4;letter-spacing:-0.380px;left:2.20px;top:724.40px;transform:rotate(-90deg);">Favorites</div>
<svg style="left:0;top:0" width="18" height="765" viewBox="0 0 18 765"><path d="M3.9 64 H8.4 L9.6 66 H13.5 V71.8 H3.9 Z" fill="#c6c7c8"/><circle cx="8.6" cy="131.8" r="2.3" fill="none" stroke="#c3c5c6" stroke-width="1.3"/><path d="M3.1 131.8 H6 M11.2 131.8 H14.1" stroke="#c3c5c6" stroke-width="1.3"/><path d="M5.6 226 V217.6 H9.2 M13.1 226 V221.4 H8.4 M10.2 219.2 L8 221.4 L10.2 223.6" fill="none" stroke="#c3c5c6" stroke-width="1.5"/><rect x="4.9" y="664.2" width="3.5" height="3.5" fill="#c3c5c6"/><rect x="9.1" y="664.2" width="3.6" height="3.5" fill="#c3c5c6"/><rect x="9.1" y="660" width="3.6" height="3.5" fill="#c3c5c6"/><polygon points="8.60,728.90 9.95,732.54 13.83,732.70 10.79,735.11 11.83,738.85 8.60,736.70 5.37,738.85 6.41,735.11 3.37,732.70 7.25,732.54" fill="#c4c6c7"/></svg>
<div class="rv" style="font-size:10.0px;color:#c4c4c4;letter-spacing:-0.282px;left:1598.40px;top:47.80px;transform:rotate(90deg);">Flutter Performance</div>
<div class="rv" style="font-size:10.0px;color:#c4c4c4;letter-spacing:-0.187px;left:1598.40px;top:164.70px;transform:rotate(90deg);">Flutter Outline</div>
<div class="rv" style="font-size:10.0px;color:#c4c4c4;letter-spacing:-0.215px;left:1598.40px;top:259.40px;transform:rotate(90deg);">Flutter Inspector</div>
<div class="rv" style="font-size:10.0px;color:#c4c4c4;letter-spacing:-0.351px;left:1598.40px;top:696.80px;transform:rotate(90deg);">ADB Wi-Fi</div>
<svg style="left:1586px;top:33.0px" width="10.4" height="11.4" viewBox="1.5 0.8 13.5 15"><use href="#flutter"/></svg>
<svg style="left:1586px;top:150.6px" width="10.4" height="11.4" viewBox="1.5 0.8 13.5 15"><use href="#flutter"/></svg>
<svg style="left:1586px;top:244.8px" width="10.4" height="11.4" viewBox="1.5 0.8 13.5 15"><use href="#flutter"/></svg>
<svg style="left:1593.4px;top:252.4px" width="4" height="4"><circle cx="1.7" cy="1.7" r="1.6" fill="#4fe01c"/></svg>
<svg style="left:1585.4px;top:682.6px" width="12" height="10" viewBox="0 0 12 10"><g fill="none" stroke="#c3c5c6" stroke-width="1"><path d="M0.8 4.4 A7 7 0 0 1 11.2 4.4"/><path d="M2.6 6.2 A4.6 4.6 0 0 1 9.4 6.2"/><path d="M4.3 7.8 A2.4 2.4 0 0 1 7.7 7.8"/></g><circle cx="6" cy="9" r="0.9" fill="#c3c5c6"/></svg>
<div style="position:absolute;left:1599px;top:0px;width:1px;height:765px;background:#5e6062;"></div>
<div class="t" style="left:38.30px;top:750.00px;height:16px;line-height:16px;font-size:9.5px;color:#c0c0c0;letter-spacing:-0.113px;">Git</div>
<div class="t" style="left:80.80px;top:750.00px;height:16px;line-height:16px;font-size:9.5px;color:#c0c0c0;letter-spacing:-0.376px;">Run</div>
<div class="t" style="left:127.00px;top:750.00px;height:16px;line-height:16px;font-size:9.5px;color:#c0c0c0;letter-spacing:-0.518px;">TODO</div>
<div class="t" style="left:183.50px;top:750.00px;height:16px;line-height:16px;font-size:9.5px;color:#c0c0c0;letter-spacing:-0.103px;">Problems</div>
<div class="t" style="left:255.50px;top:750.00px;height:16px;line-height:16px;font-size:9.5px;color:#c0c0c0;letter-spacing:-0.112px;">Terminal</div>
<div class="t" style="left:323.50px;top:750.00px;height:16px;line-height:16px;font-size:9.5px;color:#c0c0c0;letter-spacing:-0.051px;">Dart Analysis</div>
<div class="t" style="left:1532.60px;top:750.00px;height:16px;line-height:16px;font-size:9.5px;color:#c0c0c0;letter-spacing:-0.087px;">Event Log</div>
<svg style="left:0;top:748px" width="1600" height="17" viewBox="0 748 1600 17"><path d="M26.7 753 V762.6 M26.7 759.8 H31.4 V754.8 M29 756.8 L31.4 754.2 L33.8 756.8" fill="none" stroke="#afb1b3" stroke-width="1.4"/><path d="M68.1 753.8 L74.7 757.7 L68.1 761.6 Z" fill="#afb1b3"/><rect x="113.8" y="754.0" width="1.6" height="1.3" fill="#afb1b3"/><rect x="116.6" y="754.0" width="6" height="1.3" fill="#afb1b3"/><rect x="113.8" y="756.8" width="1.6" height="1.3" fill="#afb1b3"/><rect x="116.6" y="756.8" width="6" height="1.3" fill="#afb1b3"/><rect x="113.8" y="759.6" width="1.6" height="1.3" fill="#afb1b3"/><rect x="116.6" y="759.6" width="6" height="1.3" fill="#afb1b3"/><circle cx="174.5" cy="757.4" r="4.5" fill="#afb1b3"/><rect x="173.8" y="754.6" width="1.4" height="3.4" fill="#3c3f41"/><rect x="173.8" y="759" width="1.4" height="1.4" fill="#3c3f41"/><rect x="241.4" y="753" width="9.4" height="8.6" fill="#afb1b3"/><path d="M243.2 755.2 L245.4 757 L243.2 758.8 M246.2 759.4 H249" fill="none" stroke="#3c3f41" stroke-width="1"/><path d="M311.4 754.6 L314.4 752.8 H316.4 L319.6 757.6 V760.4 H317.6 L315 762 L309.8 757 Z" fill="#afb1b3"/><path d="M311.6 755 L317.4 760.4 M313.8 753.4 L319 758.6" stroke="#3c3f41" stroke-width="0.7"/><path d="M1523.5 752 A5.5 5.5 0 1 0 1523.5 763 H1529 V757.5 A5.5 5.5 0 0 0 1523.5 752 Z" fill="#1ea84c"/></svg>
<div class="t" style="left:1521.20px;top:750.00px;height:16px;line-height:16px;font-size:8.8px;color:#ffffff;font-weight:bold;">2</div>
<div style="position:absolute;left:442px;top:762.3px;width:83px;height:3px;background:#9b9ba3;border-radius:3px 3px 0 0;"></div>
<div style="position:absolute;left:410px;top:737px;width:1173px;height:11px;background:#3b3e40;"></div>
<div style="position:absolute;left:412.5px;top:739.2px;width:1020px;height:6.8px;background:#55595b;border-radius:3.4px;"></div>
<div style="position:absolute;left:1573.2px;top:463px;width:6.9px;height:100.4px;background:#4b4b4b;border-radius:3.4px;"></div>
<div style="position:absolute;left:1571px;top:90.8px;width:11.4px;height:2px;background:#e89a12;"></div>
<div style="position:absolute;left:1571px;top:536px;width:11.6px;height:1.4px;background:#a38e6c;"></div>
<div style="position:absolute;left:1567.3px;top:441.4px;width:2px;height:4.6px;background:#1b86c4;border-radius:1px;"></div>
<div style="position:absolute;left:1567.3px;top:488px;width:2px;height:4.6px;background:#1b86c4;border-radius:1px;"></div>
<div style="position:absolute;left:1567.3px;top:556.6px;width:2px;height:4.6px;background:#5f93b3;border-radius:1px;"></div>
<svg style="left:1460px;top:48px" width="123" height="16" viewBox="1460 48 123 16"><path d="M1478.3 50.6 L1483.4 60.3 H1473.2 Z" fill="#f0a30a"/><path d="M1478.3 53.8 V57.2 M1478.3 58 V59.3" stroke="#2b2b2b" stroke-width="1.2"/><path d="M1501.6 50.6 L1506.7 60.3 H1496.5 Z" fill="#9d8a6d"/><path d="M1501.6 53.8 V57.2 M1501.6 58 V59.3" stroke="#2b2b2b" stroke-width="1.2"/><path d="M1520.4 55.0 L1524.0 58.5 L1529.2 52.3" fill="none" stroke="#12b14b" stroke-width="2.2"/><path d="M1520 61.2 L1521.6 59.8 L1523.2 61.2 L1524.8 59.8 L1526.4 61.2 L1528 59.8 L1529.4 61.0" fill="none" stroke="#12b14b" stroke-width="1.1"/><path d="M1551.6 57.3 L1555.2 53.8 L1558.8 57.3" fill="none" stroke="#cfd0d1" stroke-width="1.5"/><path d="M1569.1 54.5 L1572.6 58 L1576.1 54.5" fill="none" stroke="#cfd0d1" stroke-width="1.5"/></svg>
<div class="t" style="left:1485.30px;top:48.00px;height:16px;line-height:16px;font-size:9.6px;color:#c3c3c3;-webkit-text-stroke:0.3px;">1</div>
<div class="t" style="left:1508.40px;top:48.00px;height:16px;line-height:16px;font-size:9.6px;color:#c3c3c3;-webkit-text-stroke:0.3px;">1</div>
<div class="t" style="left:1532.40px;top:48.00px;height:16px;line-height:16px;font-size:9.6px;color:#c3c3c3;letter-spacing:-0.436px;-webkit-text-stroke:0.3px;">14</div>
<div style="position:absolute;left:712.2px;top:431.0px;width:34.4px;height:15.4px;border:2.5px solid #f92b0a;"></div>
<div class="t" style="left:764.60px;top:453.00px;height:16px;line-height:16px;font-size:8.66px;color:#ffffff;font-weight:bold;letter-spacing:-0.106px;">change here country code</div>
</div></body></html>
